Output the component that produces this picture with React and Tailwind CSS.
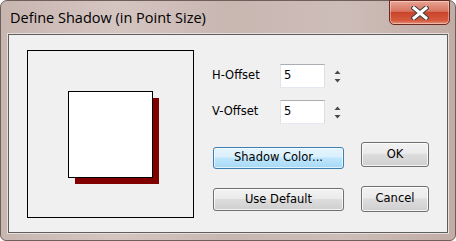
import React from "react";

function Spinner() {
  return (
    <div className="flex flex-col items-center justify-center ml-[6px] w-[12px] h-[24px] gap-[3px]">
      <svg width="7" height="5" viewBox="0 0 7 5"><path d="M3.5 0.5 L6.5 4 L0.5 4 Z" fill="#4a4a4a" /></svg>
      <svg width="7" height="5" viewBox="0 0 7 5"><path d="M0.5 1 L6.5 1 L3.5 4.5 Z" fill="#4a4a4a" /></svg>
    </div>
  );
}

function NumField({ label, value }) {
  return (
    <div className="flex items-center h-[24px]">
      <div className="w-[68px] text-[11.5px] text-black">{label}</div>
      <div className="w-[45px] h-[24px] bg-white border border-[#abadb3] border-l-[#e2e3ea] border-b-[#e3e9ef] border-r-[#dbdfe6] flex items-center pl-[3px] text-[11.5px] text-black">
        {value}
      </div>
      <Spinner />
    </div>
  );
}

function Btn({ children, w, h, primary }) {
  const cls = primary
    ? "border-[#3c7fb1] bg-[linear-gradient(#e5f4fc_0%,#d9f0fc_45%,#bee6fd_50%,#a7d9f5_100%)] shadow-[inset_0_0_0_1px_#ffffffa0]"
    : "border-[#707070] bg-[linear-gradient(#f2f2f2_0%,#ebebeb_45%,#dddddd_50%,#cfcfcf_100%)] shadow-[inset_0_0_0_1px_#ffffffc0]";
  return (
    <div
      className={`flex items-center justify-center rounded-[3px] border text-[11.5px] text-black ${cls}`}
      style={{ width: w, height: h }}
    >
      {children}
    </div>
  );
}

export default function App() {
  return (
    <div className="w-[456px] h-[241px] overflow-hidden bg-white">
      <div className="w-[456px] h-[241px] rounded-t-[7px] rounded-b-[6px] border border-[#6e5f5b] bg-[linear-gradient(90deg,#c7b5b0_0%,#d5c5c1_25%,#c8b6b1_50%,#cdbdb8_75%,#c2aca6_100%)] flex flex-col font-['DejaVu_Sans',sans-serif]">
        <div className="h-[33px] flex items-start shrink-0">
          <div className="pl-[9px] pt-[8px] text-[14.5px] leading-[18px] text-black font-['Open_Sans',sans-serif] flex-1">
            Define Shadow (in Point Size)
          </div>
          <div className="mr-[5px] mt-[-1px] w-[61px] h-[25px] rounded-b-[5px] border border-[#6a2a20] bg-[linear-gradient(#e8a494_0%,#d7745f_45%,#c8442a_50%,#d65a3f_85%,#e8907a_100%)] shadow-[inset_0_0_0_1px_#ffffff60] flex items-center justify-center">
            <svg width="18" height="14" viewBox="0 0 18 14">
              <path d="M3 2 L15 12 M15 2 L3 12" stroke="#3d3d3d" strokeWidth="5" strokeLinecap="square" />
              <path d="M3 2 L15 12 M15 2 L3 12" stroke="#ffffff" strokeWidth="3" strokeLinecap="square" />
            </svg>
          </div>
        </div>
        <div className="mx-[7px] mb-[7px] flex-1 border border-[#5e5e5e] outline outline-1 outline-[#e8dedb] bg-[#f0f0f0] flex pl-[18px] pt-[15px]">
          <div className="w-[167px] h-[168px] border border-black pl-[40px] pt-[40px] shrink-0">
            <div className="relative w-[85px] h-[87px]">
              <div className="absolute left-[7px] top-[7px] w-[84px] h-[86px] bg-[#800000]" />
              <div className="absolute inset-0 bg-white border border-black" />
            </div>
          </div>
          <div className="ml-[18px] flex flex-col">
            <div className="mt-[14px]">
              <NumField label="H-Offset" value="5" />
            </div>
            <div className="mt-[12px]">
              <NumField label="V-Offset" value="5" />
            </div>
            <div className="flex mt-[18px]">
              <div className="flex flex-col ml-[1px] pt-[5px] gap-[19px]">
                <Btn w={131} h={22} primary>Shadow Color...</Btn>
                <Btn w={131} h={23}>Use Default</Btn>
              </div>
              <div className="flex flex-col ml-[17px] gap-[19px]">
                <Btn w={68} h={25}>OK</Btn>
                <Btn w={68} h={26}>Cancel</Btn>
              </div>
            </div>
          </div>
        </div>
      </div>
    </div>
  );
}
